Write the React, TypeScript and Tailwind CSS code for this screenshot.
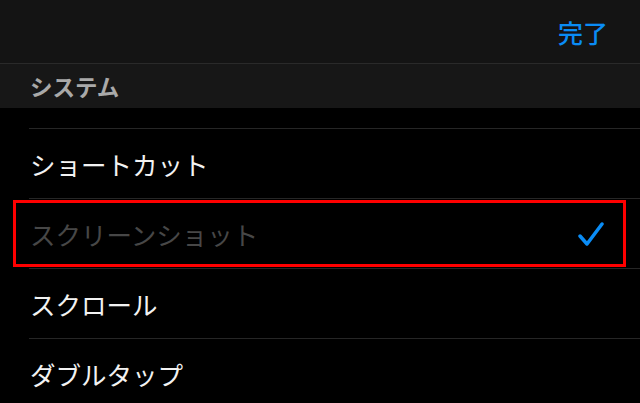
import { Fragment } from "react";

const items = [
  { label: "ショートカット", selected: false },
  { label: "スクリーンショット", selected: true },
  { label: "スクロール", selected: false },
  { label: "ダブルタップ", selected: false },
];

export default function App() {
  return (
    <div
      className="w-[640px] h-[403px] overflow-hidden bg-black"
      style={{ fontFamily: '"Noto Sans CJK JP", "Noto Sans", sans-serif' }}
    >
      {/* Top bar */}
      <div className="h-[64px] bg-[#141414] border-b border-[#2a2a2a] flex items-center justify-end pr-[32px]">
        <span className="text-[25px] font-medium text-[#0a8cf5] leading-none mt-[2px]">
          完了
        </span>
      </div>

      {/* Section header */}
      <div className="h-[44px] bg-[#171717] flex items-center px-[30px]">
        <span className="text-[22.5px] font-bold text-[#a9a9a9] leading-none">
          システム
        </span>
      </div>

      <div className="h-[20px]" />

      {/* Options */}
      <div className="pl-[29px]">
        {items.map((item) => (
          <Fragment key={item.label}>
            <div className="relative h-[70px] border-t border-[#262626] flex items-center justify-between pr-[36px]">
              <span
                className={
                  "text-[25.5px] leading-none pl-[1px] " +
                  (item.selected ? "text-[#474747]" : "text-[#f2f2f2]")
                }
              >
                {item.label}
              </span>
              {item.selected && (
                <svg width="26" height="24" viewBox="0 0 26 24" fill="none">
                  <path
                    d="M2 14 L9 22 L24 2"
                    stroke="#0a8cf5"
                    strokeWidth="3.5"
                    strokeLinecap="round"
                    strokeLinejoin="round"
                  />
                </svg>
              )}
              {item.selected && (
                <div className="absolute left-[-16px] right-[14px] top-[1px] bottom-[1px] border-[3px] border-[#ff0000] pointer-events-none" />
              )}
            </div>
          </Fragment>
        ))}
      </div>
    </div>
  );
}
